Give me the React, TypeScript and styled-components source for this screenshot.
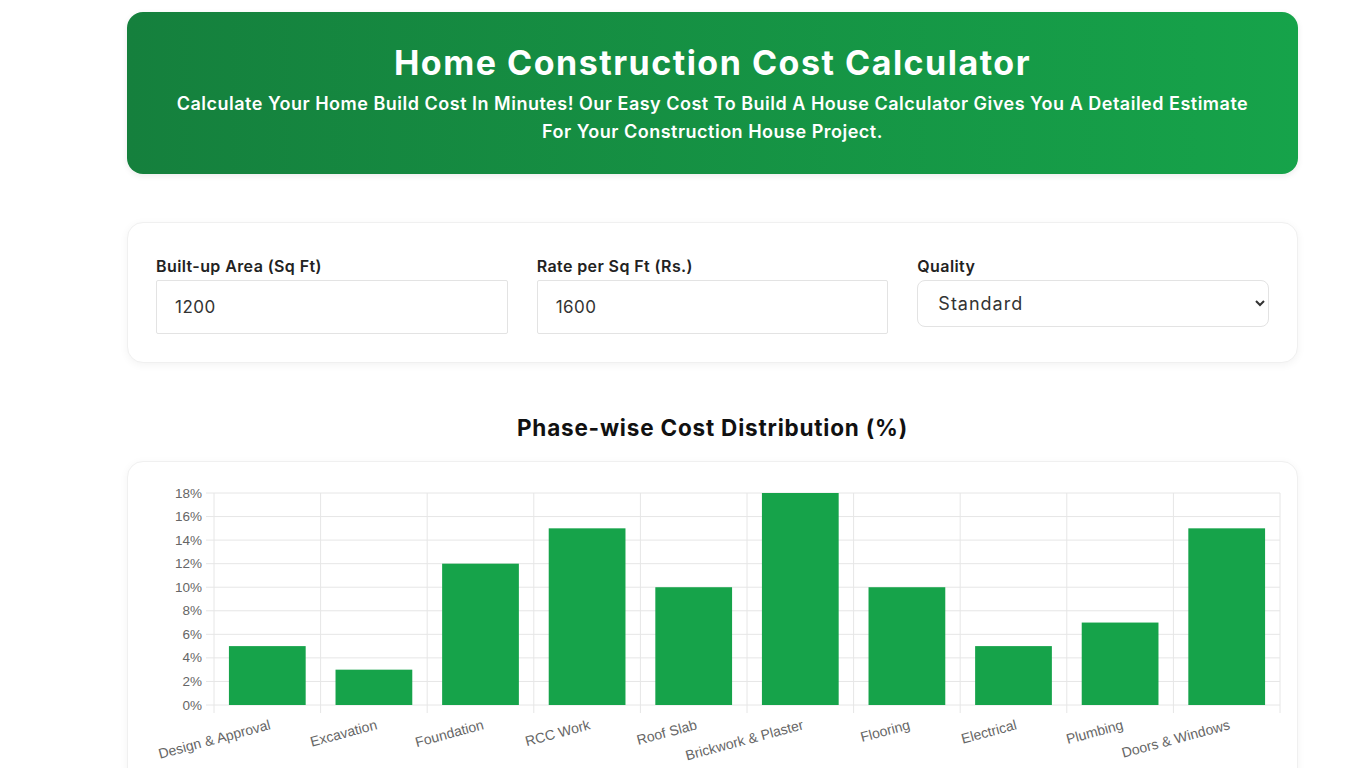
import React from "react";
import styled, { createGlobalStyle } from "styled-components";

const GlobalStyle = createGlobalStyle`
  * { box-sizing: border-box; }
  body {
    margin: 0;
    background: #ffffff;
    font-family: Inter, "Noto Sans", sans-serif;
    color: #1f1f1f;
  }
`;

const Page = styled.div`
  width: 1171px;
  margin-left: 127px;
  padding-top: 12px;
  display: flex;
  flex-direction: column;
`;

const Hero = styled.header`
  background: linear-gradient(90deg, #15803d 0%, #16a34a 100%);
  border-radius: 16px;
  padding: 30px 40px 30px;
  height: 162px;
  text-align: center;
  color: #ffffff;
  box-shadow: 0 2px 6px rgba(0, 0, 0, 0.08);
`;

const Title = styled.h1`
  margin: 0 0 6px;
  font-size: 34px;
  font-weight: 700;
  line-height: 42px;
  letter-spacing: 1.5px;
`;

const Subtitle = styled.p`
  margin: 0;
  font-size: 18px;
  font-weight: 600;
  line-height: 28px;
  letter-spacing: 0.5px;
`;

const Card = styled.section`
  background: #ffffff;
  border: 1px solid #f0f0f0;
  border-radius: 16px;
  box-shadow: 0 2px 8px rgba(0, 0, 0, 0.05);
`;

const FormCard = styled(Card)`
  margin-top: 48px;
  padding: 34px 28px 28px;
  display: grid;
  grid-template-columns: repeat(3, 1fr);
  column-gap: 29px;
`;

const Field = styled.label`
  display: flex;
  flex-direction: column;
  gap: 5px;
`;

const Label = styled.span`
  font-size: 16px;
  font-weight: 600;
  color: #222222;
  line-height: 18px;
  letter-spacing: 0.4px;
`;

const TextInput = styled.input`
  height: 54px;
  border: 1px solid #e3e3e3;
  border-radius: 2px;
  padding: 0 18px;
  font-family: inherit;
  font-size: 17px;
  letter-spacing: 0.5px;
  color: #333333;
  outline: none;
`;

const Select = styled.select`
  height: 47px;
  border: 1px solid #e3e3e3;
  border-radius: 8px;
  padding: 0 16px;
  font-family: inherit;
  font-size: 18px;
  letter-spacing: 1px;
  color: #333333;
  background: #ffffff;
  outline: none;
`;

const ChartTitle = styled.h2`
  margin: 52px 0 20px;
  text-align: center;
  font-size: 22.5px;
  font-weight: 700;
  line-height: 26px;
  letter-spacing: 0.8px;
  color: #111111;
`;

const ChartCard = styled(Card)`
  height: 330px;
  overflow: hidden;
`;

const phases = [
  { name: "Design & Approval", value: 5 },
  { name: "Excavation", value: 3 },
  { name: "Foundation", value: 12 },
  { name: "RCC Work", value: 15 },
  { name: "Roof Slab", value: 10 },
  { name: "Brickwork & Plaster", value: 18 },
  { name: "Flooring", value: 10 },
  { name: "Electrical", value: 5 },
  { name: "Plumbing", value: 7 },
  { name: "Doors & Windows", value: 15 },
];

function BarChart() {
  const left = 86;
  const right = 1152;
  const top = 31;
  const bottom = 243;
  const max = 18;
  const step = (right - left) / phases.length;
  const y = (v: number) => bottom - (v / max) * (bottom - top);
  const ticks = Array.from({ length: 10 }, (_, i) => i * 2);
  const barW = step * 0.72;

  return (
    <svg width="1171" height="330" viewBox="0 0 1171 330">
      {ticks.map((t) => (
        <g key={t}>
          <line x1={left - 8} x2={right} y1={y(t)} y2={y(t)} stroke="#e6e6e6" strokeWidth="1" />
          <text
            x={left - 12}
            y={y(t) + 4.5}
            textAnchor="end"
            fontFamily="'Liberation Sans', Arial, sans-serif"
            fontSize="13.5"
            fill="#666666"
          >
            {t}%
          </text>
        </g>
      ))}
      {Array.from({ length: phases.length + 1 }, (_, i) => (
        <line
          key={i}
          x1={left + i * step}
          x2={left + i * step}
          y1={top}
          y2={bottom + 8}
          stroke="#e6e6e6"
          strokeWidth="1"
        />
      ))}
      {phases.map((p, i) => {
        const cx = left + step * i + step / 2;
        return (
          <g key={p.name}>
            <rect
              x={cx - barW / 2}
              y={y(p.value)}
              width={barW}
              height={bottom - y(p.value)}
              fill="#16a34a"
            />
            <text
              transform={`translate(${cx + 4}, ${bottom + 24}) rotate(-15)`}
              textAnchor="end"
              fontFamily="'Liberation Sans', Arial, sans-serif"
              fontSize="14"
              fill="#666666"
            >
              {p.name}
            </text>
          </g>
        );
      })}
    </svg>
  );
}

export default function App() {
  return (
    <>
      <GlobalStyle />
      <Page>
        <Hero>
          <Title>Home Construction Cost Calculator</Title>
          <Subtitle>
            Calculate Your Home Build Cost In Minutes! Our Easy Cost To Build A House Calculator Gives You A
            Detailed Estimate For Your Construction House Project.
          </Subtitle>
        </Hero>

        <FormCard>
          <Field>
            <Label>Built-up Area (Sq Ft)</Label>
            <TextInput type="text" defaultValue="1200" />
          </Field>
          <Field>
            <Label>Rate per Sq Ft (Rs.)</Label>
            <TextInput type="text" defaultValue="1600" />
          </Field>
          <Field>
            <Label>Quality</Label>
            <Select defaultValue="standard">
              <option value="basic">Basic</option>
              <option value="standard">Standard</option>
              <option value="premium">Premium</option>
            </Select>
          </Field>
        </FormCard>

        <ChartTitle>Phase-wise Cost Distribution (%)</ChartTitle>
        <ChartCard>
          <BarChart />
        </ChartCard>
      </Page>
    </>
  );
}
